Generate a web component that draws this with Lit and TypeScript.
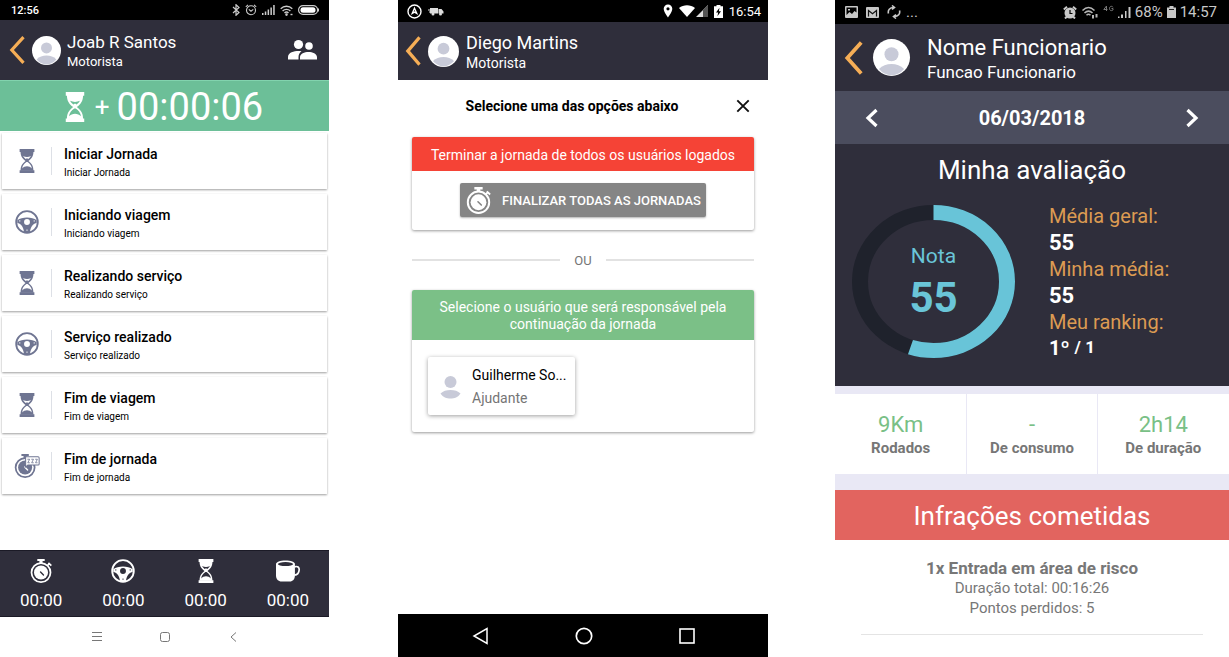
import { LitElement, html, svg, css } from "lit";
import { customElement, property } from "lit/decorators.js";

const hourglass = (size: number) => html`<svg width=${size} height=${size} viewBox="0 0 26 26" aria-hidden="true">
  <path fill="currentColor" d="M5 0h16v3.200H5zM5 23h16v3H5z"/>
  <path fill="currentColor" d="M6 2.500h14c0 5.300-1.800 7.600-5.400 10.500C18.200 15.900 20 18.200 20 23.500H6C6 18.200 7.800 15.900 11.400 13 7.800 10.100 6 7.800 6 2.500z"/>
  <path fill="var(--bg)" d="M8.700 7.600c2.700 1.300 5.900 1.300 8.600 0-.6 1.200-1.600 2.300-2.900 3.300l-1.400-1-1.400 1c-1.300-1-2.300-2.100-2.900-3.300z"/>
  <path fill="var(--bg)" d="M12.400 14.200h1.200c2.500 1.800 4.200 3.700 4.600 6.800-1.300-1.400-3.200-2.200-5.200-2.200S9.100 19.600 7.800 21c.4-3.100 2.100-5 4.600-6.800z"/>
</svg>`;

const wheel = (size: number) => html`<svg width=${size} height=${size} viewBox="0 0 26 26" aria-hidden="true">
  <circle cx="13" cy="13" r="11.700" fill="none" stroke="currentColor" stroke-width="2"/>
  <path fill="currentColor" fill-rule="evenodd" d="M2.500 11C5 9.400 9 8.200 13 8.200s8 1.200 10.500 2.800v3.200c-3.500.2-6.500 3.800-7.300 9.800H9.800c-.8-6-3.800-9.600-7.300-9.800zM13 9.800a3.200 3.200 0 1 0 0 6.400 3.200 3.200 0 0 0 0-6.400z"/>
  <circle cx="5.200" cy="11.800" r=".7" fill="var(--bg)"/><circle cx="20.800" cy="11.800" r=".7" fill="var(--bg)"/>
  <circle cx="13" cy="21.800" r=".8" fill="var(--bg)"/>
</svg>`;

const stopwatchArt = svg`
  <path fill="currentColor" d="M9 0h8v2.300h-2.300v2.500h-3.400V2.300H9z"/>
  <path stroke="currentColor" stroke-width="1.800" d="M21 4.200l3.200 3M20 7l2.400-2.600"/>
  <circle cx="13" cy="14.700" r="10.300" fill="none" stroke="currentColor" stroke-width="1.900"/>
  <circle cx="13" cy="14.700" r="7.600" fill="currentColor"/>
  <path stroke="var(--bg)" stroke-width="1.500" stroke-linecap="round" d="M12.500 14.200l3.200 3.200"/>`;

const stopwatch = (size: number) => html`<svg width=${size} height=${size} viewBox="0 0 26 26" aria-hidden="true">${stopwatchArt}</svg>`;

const stopwatchRest = (size: number) => html`<svg width=${size + 3} height=${size} viewBox="0 0 29 26" aria-hidden="true">
  ${stopwatchArt}
  <path fill="var(--bg)" stroke="currentColor" stroke-width="1.100" d="M13.500 3h13.500a1.200 1.200 0 0 1 1.200 1.200v6.600a1.200 1.200 0 0 1-1.200 1.200H16l-2.800 2.200.4-2.800z"/>
  <path fill="none" stroke="currentColor" stroke-width=".9" d="M15.500 5.700h2.400l-2 3.800h2.200M19.700 5.700h2.400l-2 3.800h2.200M23.900 5.700h2.400l-2 3.800h2.200"/>
</svg>`;

const cup = (size: number) => html`<svg width=${size} height=${size} viewBox="0 0 26 26" aria-hidden="true">
  <path fill="currentColor" d="M0 5.500C0 3 4.500 1.500 10.300 1.500S20.500 3 20.500 5.500V18c0 4-2.500 6.500-5.500 6.500H6C2.500 24.500 0 22 0 18z"/>
  <ellipse cx="10.300" cy="5.500" rx="8.300" ry="2.200" fill="var(--bg)"/>
  <path fill="none" stroke="currentColor" stroke-width="1.800" d="M20 8.500c3.500-1.200 5.300.5 5.100 3.300-.2 3.200-2.100 5.400-5.100 5.700"/>
</svg>`;

const person = html`<svg class="person" viewBox="0 0 30 30" aria-hidden="true">
  <circle cx="15" cy="12.300" r="5.700"/><path d="M4.800 24.300C7.500 21.500 11 20.300 15 20.300s7.500 1.200 10.200 4A14.500 14.500 0 0 1 15 29.500a14.500 14.500 0 0 1-10.200-5.200z"/>
</svg>`;

@customElement("user-header")
class UserHeader extends LitElement {
  @property() name = "";
  @property() role = "";
  static styles = css`
    :host { display: flex; align-items: center; background: #2f2e3b; color: #fff; padding: 0 11px 0 9px; box-sizing: border-box; --avatar: 29px; --gap: 6px; --name: 17px; --sub: 13px; --line: 20px; --chev: 28px; --chev-width: 16px; --chev-gap: 7px; }
    button { all: unset; display: flex; cursor: pointer; }
    .chev { height: var(--chev); width: var(--chev-width); }
    .avatar { width: var(--avatar); height: var(--avatar); border-radius: 50%; background: #fff; overflow: hidden; margin-left: var(--chev-gap); margin-right: var(--gap); flex: none; }
    .person { width: 100%; height: 100%; display: block; fill: #c8cad8; }
    .who { flex: 1; min-width: 0; padding-top: 4px; }
    h1, p { margin: 0; font-weight: 400; line-height: var(--line); white-space: nowrap; }
    h1 { font-size: var(--name); }
    p { font-size: var(--sub); }
  `;
  render() {
    return html`<button aria-label="Voltar"><svg class="chev" viewBox="0 0 16 28" preserveAspectRatio="none" fill="none" stroke="#f6ae56" stroke-width="3.200"><path d="M14.500 1.200L2.800 14l11.700 12.800"/></svg></button>
      <div class="avatar">${person}</div>
      <div class="who"><h1>${this.name}</h1><p>${this.role}</p></div>
      <slot></slot>`;
  }
}

const steps = [
  { label: "Iniciar Jornada", icon: hourglass },
  { label: "Iniciando viagem", icon: wheel },
  { label: "Realizando serviço", icon: hourglass },
  { label: "Serviço realizado", icon: wheel },
  { label: "Fim de viagem", icon: hourglass },
  { label: "Fim de jornada", icon: stopwatchRest },
];

const totals = [
  { icon: stopwatch, label: "Jornada" },
  { icon: wheel, label: "Direção" },
  { icon: hourglass, label: "Espera" },
  { icon: cup, label: "Descanso" },
];

const averages = [
  ["Média geral:", "55"],
  ["Minha média:", "55"],
];

const stats = [
  ["9Km", "Rodados"],
  ["-", "De consumo"],
  ["2h14", "De duração"],
];

@customElement("app-root")
class AppRoot extends LitElement {
  static styles = css`
    :host { display: grid; grid-template-columns: 329fr 69fr 370fr 67fr 394fr; height: 100vh; overflow: hidden; background: #fff; font-family: Roboto, "Liberation Sans", sans-serif; color: #000; --bg: #fff; }
    * { box-sizing: border-box; }
    h2, h3, p, ul, dl, dd { margin: 0; padding: 0; }
    ul { list-style: none; }
    button { all: unset; box-sizing: border-box; cursor: pointer; }
    svg { display: block; flex: none; }
    .phone { display: flex; flex-direction: column; min-width: 0; height: 100vh; overflow: hidden; }
    .phone:nth-of-type(2) { grid-column: 3; }
    .phone:nth-of-type(3) { grid-column: 5; }
    .phone > * { flex: none; }
    .phone > .grow { flex: 1 0 auto; }
    .status { display: flex; align-items: center; background: #000; color: #fff; }
    .push { flex: 1; }

    .journey .status { height: 20px; padding: 0 10px 0 11px; gap: 5px; font-size: 11px; font-weight: 500; }
    .journey user-header { height: 60px; }
    .timer { height: 51px; display: flex; justify-content: center; align-items: center; background: #6cbf98; border-top: 1px solid #82d3ae; color: #fff; --bg: #6cbf98; font-size: 38px; gap: 5px; padding: 2px 6px 0 0; }
    .timer .plus { font-size: 26px; line-height: 1; padding-right: 2px; }
    .steps { padding: 2px; display: flex; flex-direction: column; gap: 5px; }
    .step { width: 100%; height: 56px; display: flex; align-items: center; background: #fff; box-shadow: 0 1px 2px rgba(0,0,0,.38); }
    .step .icon { width: 50px; height: 28px; display: flex; justify-content: center; align-items: center; color: #6f7592; border-right: 1px solid #dde0e6; }
    .step .text { padding: 2px 0 0 12px; }
    .step strong, .step small { display: block; }
    .step strong { font-size: 14px; line-height: 20px; font-weight: 500; }
    .step small { font-size: 10px; line-height: 17px; }
    .totals { height: 67px; background: #2f2e3b; color: #fff; --bg: #2f2e3b; display: grid; grid-template-columns: repeat(4, 1fr); padding-top: 2px; border-top: 1px solid #1b1a26; border-bottom: 1px solid #1b1a26; }
    .totals li { display: flex; flex-direction: column; align-items: center; justify-content: center; gap: 6px; font-size: 17px; line-height: 22px; }
    .softkeys { height: 40px; display: flex; align-items: center; justify-content: center; gap: 52px; color: #777; }
    .softkeys button { display: flex; }

    .choose .status { height: 22px; padding: 0 7px 0 9px; gap: 6px; font-size: 13px; }
    .choose user-header { height: 58px; padding: 0 7px; --avatar: 31px; --gap: 7px; --name: 18px; --sub: 14px; --line: 21px; --chev: 30px; }
    .choose-title { display: flex; align-items: center; height: 51px; padding: 0 18px 0 10px; }
    .choose-title h2 { flex: 1; text-align: center; font-size: 14px; font-weight: 700; }
    .panels { padding: 6px 14px 0; }
    .panel { border-radius: 2px; box-shadow: 0 1px 3px rgba(0,0,0,.4); }
    .panel h3 { font-size: 14px; line-height: 17px; font-weight: 400; color: #fff; text-align: center; border-radius: 2px 2px 0 0; }
    .red { background: #f54336; padding: 10px 12px 7px; }
    .green { background: #7bc087; padding: 9px 16px 7px; }
    .panel .body { padding: 12px 16px 13px; display: flex; justify-content: center; }
    .finish { display: flex; align-items: center; gap: 10px; height: 34px; padding: 0 5px; background: #858585; color: #fff; --bg: #858585; font-size: 13px; font-weight: 500; border-radius: 2px; box-shadow: 0 1px 2px rgba(0,0,0,.3); white-space: nowrap; }
    .or { display: flex; align-items: center; gap: 14px; height: 60px; color: #757575; font-size: 13px; }
    .or::before, .or::after { content: ""; flex: 1; height: 2px; background: #e2e2e2; }
    .panel .body.users { padding: 17px 16px; justify-content: flex-start; }
    .user { display: flex; align-items: center; width: 147px; height: 58px; padding: 0 6px 0 8px; background: #fff; border-radius: 2px; box-shadow: 0 1px 4px rgba(0,0,0,.38); line-height: 23px; white-space: nowrap; }
    .user .person { width: 29px; height: 32px; fill: #c8cad8; }
    .user .text { padding: 2px 0 0 7px; }
    .user strong, .user small { display: block; font-weight: 400; font-size: 14px; }
    .user small { color: #757575; }
    .navbar { height: 43px; background: #000; display: flex; align-items: center; justify-content: center; gap: 85px; color: #fff; }

    .score .status { height: 24px; padding: 0 12px 0 10px; gap: 4px; font-size: 15px; color: #c8c8c8; }
    .score user-header { height: 67px; --avatar: 37px; --gap: 17px; --name: 22px; --sub: 17px; --line: 24px; --chev: 34px; --chev-width: 19px; --chev-gap: 10px; }
    .date { height: 53px; display: flex; align-items: center; justify-content: space-between; padding: 0 30px; background: #4b4d5e; color: #fff; font-size: 20px; font-weight: 700; }
    .rating { background: #2f2e3b; color: #fff; height: 242px; padding-top: 8px; }
    .rating h2 { font-size: 26px; line-height: 36px; font-weight: 400; text-align: center; }
    .rating-row { display: flex; align-items: center; padding: 13px 17px 0; gap: 34px; }
    .dial { display: grid; flex: none; }
    .dial > * { grid-area: 1 / 1; }
    .dial-text { place-self: center; text-align: center; color: #6ac5d8; padding-bottom: 3px; }
    .dial-text span { display: block; font-size: 21px; line-height: 34px; }
    .dial-text b { display: block; font-size: 42px; line-height: 49px; font-weight: 700; }
    .averages { font-size: 20px; line-height: 26px; white-space: nowrap; padding-top: 2px; }
    .averages dt { color: #dc9b52; }
    .averages dd { font-weight: 700; font-size: 22px; line-height: 27px; }
    .averages .rank { font-size: 20px; }
    .averages small { font-size: 17px; vertical-align: 2px; line-height: 1; }
    .stats { display: grid; grid-template-columns: 132fr 130fr 132fr; gap: 1px; background: #e9e8f5; border-top: 8px solid #e9e8f5; border-bottom: 16px solid #e9e8f5; }
    .stats li { background: #fff; height: 80px; padding-top: 2px; display: flex; flex-direction: column; justify-content: center; align-items: center; color: #767676; }
    .stats span { font-size: 22px; line-height: 26px; color: #79c086; }
    .stats b { font-size: 15px; line-height: 20px; }
    .score h2.infractions { height: 50px; line-height: 52px; background: #e2645f; color: #fff; font-size: 26px; font-weight: 400; text-align: center; }
    .events { padding: 0 26px; color: #777; text-align: center; }
    .events li { padding: 18px 0 16px; border-bottom: 1px solid #e4e4e4; }
    .events h3 { font-size: 17px; line-height: 20px; font-weight: 700; }
    .events p { font-size: 15px; line-height: 20px; }
  `;

  private journey() {
    return html`<section class="phone journey">
      <div class="status"><span>12:56</span><span class="push"></span>
        <svg width="8" height="12" viewBox="0 0 8 12" fill="none" stroke="#ccc" stroke-width="1.200"><path d="M1 3l6 5.500L4 11.300V.7L7 3.500 1 9"/></svg>
        <svg width="12" height="12" viewBox="0 0 12 12" fill="none" stroke="#ccc" stroke-width="1.100"><circle cx="6" cy="6.300" r="4.500"/><path d="M3.800 5.300L6 7.200l2.300-1.900M.8 2.800L3 .8M11.200 2.800L9 .8"/></svg>
        <svg width="13" height="10" viewBox="0 0 13 10" fill="#ccc"><path d="M0 8h1.500v2H0zM2.800 6.500h1.500V10H2.800zM5.600 4.500h1.500V10H5.600zM8.400 2.500h1.500V10H8.400zM11.200 0h1.500v10h-1.500z"/></svg>
        <svg width="13" height="11" viewBox="0 0 13 11" fill="none" stroke="#ccc" stroke-width="1.400"><path d="M.7 3.800c3.300-3.400 8.300-3.400 11.600 0M2.600 6c2.200-2.200 5.600-2.200 7.800 0M4.500 8.100c1.100-1.100 2.900-1.100 4 0"/><circle cx="6.500" cy="9.600" r=".6"/><path d="M10.500 9.500h2"/></svg>
        <svg width="21" height="10" viewBox="0 0 21 10"><rect x=".6" y=".6" width="19" height="8.800" rx="4.400" fill="none" stroke="#ccc" stroke-width="1.200"/><rect x="2.500" y="2.300" width="15" height="5.400" rx="2.500" fill="#fff"/><path stroke="#ccc" d="M20.500 3.500v3"/></svg>
      </div>
      <user-header name="Joab R Santos" role="Motorista">
        <button aria-label="Equipe"><svg width="31" height="22" viewBox="0 0 31 22" fill="#fff"><circle cx="11.500" cy="5.500" r="4.600"/><circle cx="22" cy="7" r="3.800"/><path d="M1 20.500V18c0-4.500 6-6 10.500-6 1 0 2 .1 3 .3-2.200 1.500-3 3.500-3 6v2.200zM13 20.500v-2.300c0-3.500 4.500-5.200 8.500-5.200s8.500 1.700 8.500 5.200v2.300z"/></svg></button>
      </user-header>
      <div class="timer">${hourglass(30)}<span class="plus">+</span><span>00:00:06</span></div>
      <ul class="steps grow">${steps.map((s) => html`<li><button class="step">
        <span class="icon">${s.icon(24)}</span><span class="text"><strong>${s.label}</strong><small>${s.label}</small></span>
      </button></li>`)}</ul>
      <ul class="totals">${totals.map((t) => html`<li aria-label=${t.label}>${t.icon(24)}<span>00:00</span></li>`)}</ul>
      <nav class="softkeys">
        <button aria-label="Menu"><svg width="16" height="12" viewBox="0 0 16 12" stroke="currentColor"><path d="M3 1.500h10M3 5.500h10M3 9.500h10"/></svg></button>
        <button aria-label="Início"><svg width="16" height="12" viewBox="0 0 16 12" fill="none" stroke="currentColor"><rect x="3.500" y="1.500" width="9" height="9" rx="2"/></svg></button>
        <button aria-label="Voltar"><svg width="16" height="12" viewBox="0 0 16 12" fill="none" stroke="currentColor"><path d="M11 1.500L6 6l5 4.500"/></svg></button>
      </nav>
    </section>`;
  }

  private choose() {
    return html`<section class="phone choose">
      <div class="status">
        <svg width="15" height="15" viewBox="0 0 15 15" fill="none" stroke="#fff" stroke-width="1.400"><circle cx="7.500" cy="7.500" r="6.500"/><path stroke-width="1.300" d="M7.500 4.200l2.300 5.300-2.300-1.400-2.300 1.400z"/></svg>
        <svg width="16" height="9" viewBox="0 0 16 9" fill="#ddd"><path d="M2 1h8v5.500H2zM10.500 2h3l2 2.500v2h-5zM0 2.500h3v1H0zM1 4.500h3v1H1z"/><circle cx="5" cy="7" r="1.500"/><circle cx="12.500" cy="7" r="1.500"/></svg>
        <span class="push"></span>
        <svg width="10" height="14" viewBox="0 0 10 14" fill="#fff"><path fill-rule="evenodd" d="M5 .5A4.300 4.300 0 0 0 .7 4.800C.7 8 5 13.500 5 13.500S9.300 8 9.300 4.800A4.300 4.300 0 0 0 5 .5zM5 3.200a1.600 1.600 0 1 1 0 3.200 1.600 1.600 0 0 1 0-3.200z"/></svg>
        <svg width="29" height="12" viewBox="0 0 29 12"><path fill="#fff" d="M0 3C4.500-.6 11.500-.6 16 3L8 12z"/><path fill="#ddd" d="M29 0v12H17z"/><path fill="#555" d="M29 0v12h-5V5z"/></svg>
        <svg width="9" height="13" viewBox="0 0 9 13"><path fill="#fff" d="M2.500 0h4v1.300H9V13H0V1.300h2.500z"/><path fill="#000" d="M5.500 2.800L2 7.500h2.200l-.8 3.700L7 6.300H4.900z"/></svg>
        <span>16:54</span>
      </div>
      <user-header name="Diego Martins" role="Motorista"></user-header>
      <div class="choose-title"><h2>Selecione uma das opções abaixo</h2>
        <button aria-label="Fechar"><svg width="14" height="14" viewBox="0 0 14 14" stroke="#111" stroke-width="1.900"><path d="M1.300 1.300l11.400 11.400M12.700 1.300L1.300 12.700"/></svg></button></div>
      <div class="panels grow">
        <div class="panel"><h3 class="red">Terminar a jornada de todos os usuários logados</h3>
          <div class="body"><button class="finish">${stopwatch(27)}<span>FINALIZAR TODAS AS JORNADAS</span></button></div></div>
        <div class="or">OU</div>
        <div class="panel"><h3 class="green">Selecione o usuário que será responsável pela continuação da jornada</h3>
          <div class="body users"><button class="user">
            <svg class="person" viewBox="0 0 29 32"><circle cx="14.500" cy="12" r="6"/><path d="M4.500 23.500c2.500-2.500 6-3.500 10-3.500s7.500 1 10 3.500c-2.500 3.800-6 5-10 5s-7.500-1.200-10-5z"/></svg>
            <span class="text"><strong>Guilherme So...</strong><small>Ajudante</small></span></button></div></div>
      </div>
      <nav class="navbar">
        <button aria-label="Voltar"><svg width="19" height="18" viewBox="0 0 19 18" fill="none" stroke="#fff" stroke-width="1.500"><path d="M16 1.500v15L3 9z"/></svg></button>
        <button aria-label="Início"><svg width="18" height="18" viewBox="0 0 18 18" fill="none" stroke="#fff" stroke-width="1.700"><circle cx="9" cy="9" r="7.700"/></svg></button>
        <button aria-label="Recentes"><svg width="18" height="18" viewBox="0 0 18 18" fill="none" stroke="#fff" stroke-width="1.600"><rect x="2" y="2" width="14" height="14"/></svg></button>
      </nav>
    </section>`;
  }

  private score() {
    const c = 2 * Math.PI * 73.5;
    return html`<section class="phone score">
      <div class="status">
        <svg width="13" height="12" viewBox="0 0 13 12"><rect width="13" height="12" rx="1" fill="#c8c8c8"/><path fill="#000" d="M1.500 1.500h10v5L9.500 5 7 8 4.500 6l-3 3zM3 3v1.500h2V3z"/></svg>
        <svg width="20" height="11" viewBox="0 0 20 11"><rect x="4" width="13" height="11" rx="1" fill="#c8c8c8"/><path fill="none" stroke="#111" stroke-width="1.200" d="M6.500 9.500V3.500l4 3.300 4-3.300v6"/></svg>
        <svg width="16" height="14" viewBox="0 0 16 14" fill="none" stroke="#c8c8c8" stroke-width="1.600"><path d="M2.500 8.500C1.500 5 4 2.500 7.500 2.500M6 .5l2.500 2L6 4.500M13.500 5.500c1 3.500-1.500 6-5 6M10 9.500l-2.500 2 2.500 2"/></svg>
        <span>...</span><span class="push"></span>
        <svg width="14" height="13" viewBox="0 0 14 13"><circle cx="7" cy="7" r="5.500" fill="#c8c8c8"/><path stroke="#c8c8c8" stroke-width="2" d="M.8 3.500L4 .8M13.200 3.500L10 .8M2 12.500l2-2M12 12.500l-2-2"/><path fill="none" stroke="#000" stroke-width="1.200" d="M7 4v3.500h2.500"/></svg>
        <svg width="18" height="13" viewBox="0 0 18 13" fill="none" stroke="#b5b5b5" stroke-width="1.500"><path d="M1.500 4.500c3.800-3.700 8.200-3.700 12 0M3.500 7c2.500-2.500 5.500-2.500 8 0M5.500 9.300c1.300-1.300 2.700-1.300 4 0"/><path d="M12 9v3.500M15.500 8v3.500" stroke-width="2"/></svg>
        <svg width="11" height="14" viewBox="0 0 11 14" fill="none" stroke="#777"><path d="M3.500 6V1L.8 4.500h3.700M10 2.200C9 .8 6.500 1 6.500 3.500S9 6 10 5V3.500H8.500"/></svg>
        <svg width="13" height="12" viewBox="0 0 13 12" fill="#c8c8c8"><path d="M0 10.500h1.500V12H0zM3 8.500h2V12H3zM7 5h1.500v7H7zM10.500 1h2v11h-2z"/></svg>
        <span>68%</span>
        <svg width="9" height="12" viewBox="0 0 9 12"><path fill="#c8c8c8" d="M2.500 0h4v1.500H9V12H0V1.500h2.500z"/><path stroke="#222" d="M2 3.500h5"/></svg>
        <span>14:57</span>
      </div>
      <user-header name="Nome Funcionario" role="Funcao Funcionario"></user-header>
      <div class="date">
        <button aria-label="Dia anterior"><svg width="14" height="20" viewBox="0 0 14 20" fill="none" stroke="#fff" stroke-width="3.200"><path d="M11.500 2L3 10l8.500 8"/></svg></button>
        <time datetime="2018-03-06">06/03/2018</time>
        <button aria-label="Próximo dia"><svg width="14" height="20" viewBox="0 0 14 20" fill="none" stroke="#fff" stroke-width="3.200"><path d="M2.500 2L11 10l-8.500 8"/></svg></button>
      </div>
      <div class="rating"><h2>Minha avaliação</h2>
        <div class="rating-row">
          <div class="dial">
            <svg width="163" height="153" viewBox="0 0 163 163" preserveAspectRatio="none" fill="none" stroke-width="16">
              <circle cx="81.500" cy="81.500" r="73.500" stroke="#1f222c"/>
              <circle cx="81.500" cy="81.500" r="73.500" stroke="#68c4d8" transform="rotate(-90 81.500 81.500)" stroke-dasharray="${c * 0.55} ${c}"/>
            </svg>
            <div class="dial-text"><span>Nota</span><b>55</b></div>
          </div>
          <dl class="averages">
            ${averages.map(([k, v]) => html`<dt>${k}</dt><dd>${v}</dd>`)}
            <dt>Meu ranking:</dt><dd class="rank">1º <small>/ 1</small></dd>
          </dl>
        </div>
      </div>
      <ul class="stats">${stats.map(([v, l]) => html`<li><span>${v}</span><b>${l}</b></li>`)}</ul>
      <h2 class="infractions">Infrações cometidas</h2>
      <ul class="events">
        <li><h3>1x Entrada em área de risco</h3><p>Duração total: 00:16:26</p><p>Pontos perdidos: 5</p></li>
        <li><h3>1x Excesso de velocidade</h3></li>
      </ul>
    </section>`;
  }

  render() {
    return html`${this.journey()}${this.choose()}${this.score()}`;
  }
}
